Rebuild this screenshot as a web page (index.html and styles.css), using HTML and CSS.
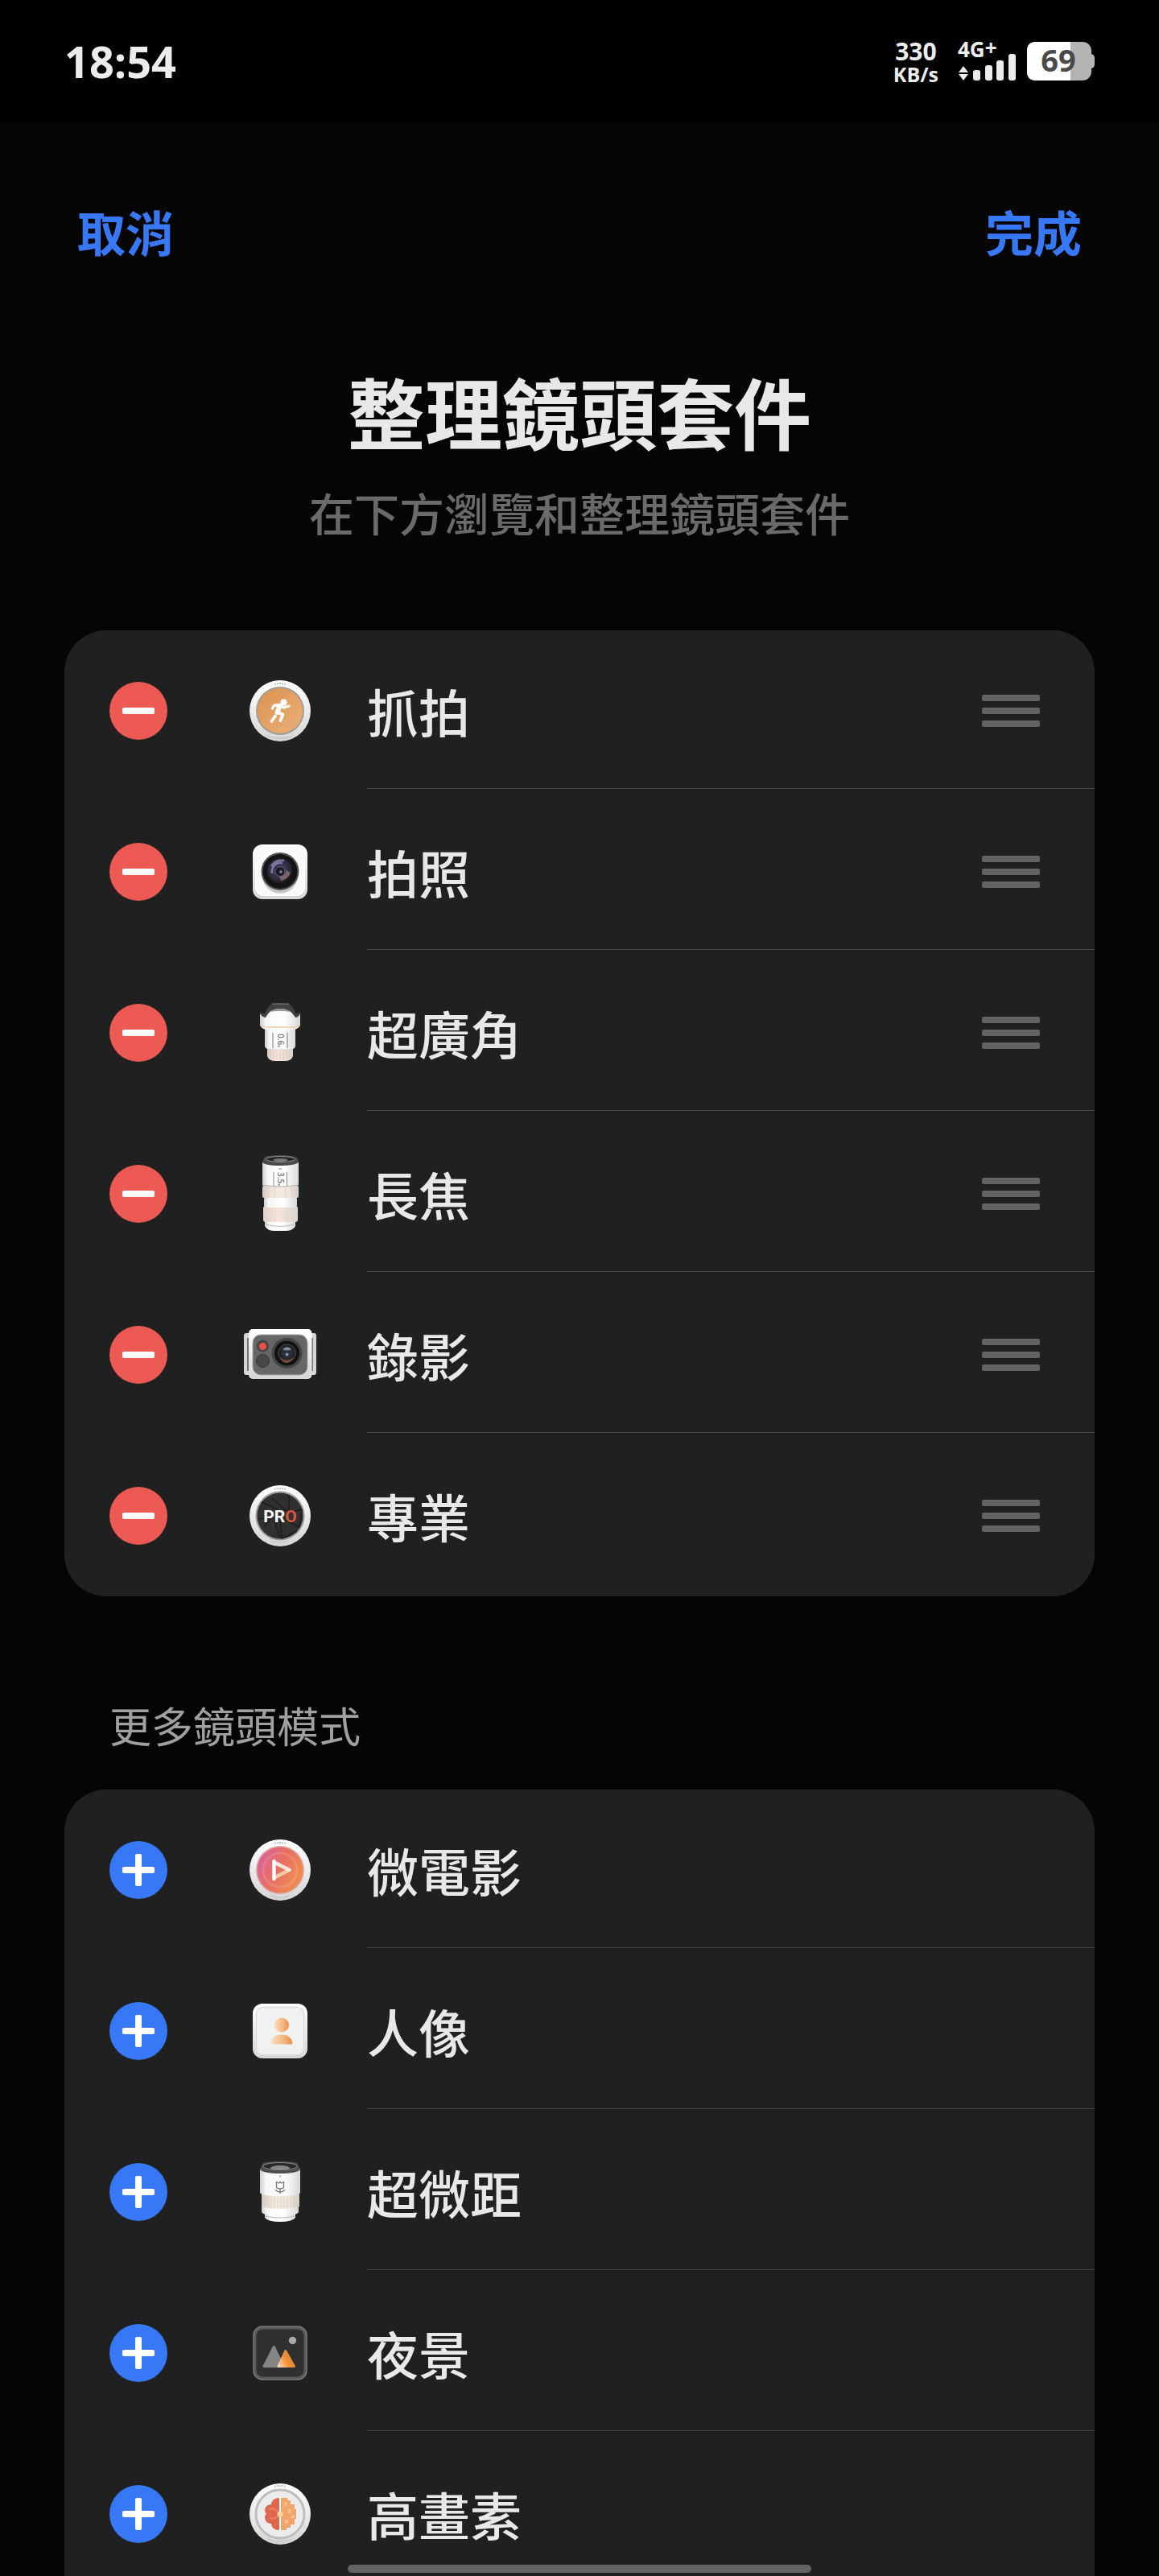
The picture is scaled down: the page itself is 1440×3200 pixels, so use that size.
FILE: index.html
```html
<!DOCTYPE html>
<html lang="zh-Hant">
<head>
<meta charset="utf-8">
<meta name="viewport" content="width=device-width, initial-scale=1">
<title>整理鏡頭套件</title>
<link rel="stylesheet" href="styles.css">
</head>
<body>
<svg class="defs" aria-hidden="true">
  <defs>
    <linearGradient id="rim" x1="0" y1="0" x2="0" y2="1"><stop offset="0" stop-color="#fff"/><stop offset="1" stop-color="#d6d6d6"/></linearGradient>
    <linearGradient id="barrel" x1="0" x2="1"><stop offset="0" stop-color="#cfcfcf"/><stop offset=".15" stop-color="#f8f8f8"/><stop offset=".6" stop-color="#fff"/><stop offset="1" stop-color="#d8d8d8"/></linearGradient>
    <linearGradient id="beige" x1="0" x2="1"><stop offset="0" stop-color="#d5cbc1"/><stop offset=".3" stop-color="#f3e9df"/><stop offset=".7" stop-color="#f3e8de"/><stop offset="1" stop-color="#d3ccc5"/></linearGradient>
    <linearGradient id="blush" x1="0" x2="1"><stop offset="0" stop-color="#dccfc9"/><stop offset=".4" stop-color="#f8e4da"/><stop offset="1" stop-color="#dad4cf"/></linearGradient>
    <linearGradient id="orange" x1="0" y1="0" x2="1" y2="1"><stop offset="0" stop-color="#d9924f"/><stop offset="1" stop-color="#edb07a"/></linearGradient>
    <linearGradient id="sunset" x1="0" y1=".2" x2="1" y2=".7"><stop offset="0" stop-color="#dc609c"/><stop offset=".5" stop-color="#e9705f"/><stop offset="1" stop-color="#f09150"/></linearGradient>
    <linearGradient id="peach" x1="0" x2="1"><stop offset="0" stop-color="#fbdcc0"/><stop offset=".6" stop-color="#f4b680"/><stop offset="1" stop-color="#e58f4c"/></linearGradient>
    <linearGradient id="peak" x1="0" y1="1" x2="1" y2=".4"><stop offset="0" stop-color="#fbd8b6"/><stop offset=".5" stop-color="#f1913c"/><stop offset="1" stop-color="#e28431"/></linearGradient>
    <radialGradient id="glass" cx=".45" cy=".42" r=".6"><stop offset="0" stop-color="#1c1824"/><stop offset=".35" stop-color="#3c3859"/><stop offset=".75" stop-color="#2a2833"/><stop offset="1" stop-color="#0d0d0f"/></radialGradient>
  </defs>
</svg>

<div class="screen">
  <header class="status">
    <time class="clock">18:54</time>
    <div class="indicators">
      <div class="speed"><span class="speed-value">330</span><span class="speed-unit">KB/s</span></div>
      <svg class="signal" width="74" height="48" viewBox="0 0 74 48" role="img" aria-label="4G+">
        <text x="0" y="19" class="signal-text">4G<tspan dy="-2">+</tspan></text>
        <path d="M1 38l6-8 6 8zM1 40h12l-6 8z"/>
        <rect x="19" y="35" width="9" height="13" rx="3"/><rect x="34" y="29" width="9" height="19" rx="3"/><rect x="48" y="23" width="9" height="25" rx="3"/><rect x="63" y="15" width="9" height="33" rx="3"/>
      </svg>
      <svg class="battery" width="84" height="48" viewBox="0 0 84 48" role="img" aria-label="69%">
        <path d="M80 15q4 1 4 5v8q0 4-4 5z" fill="#b4b4b4"/>
        <rect width="80" height="48" rx="11" fill="#b4b4b4"/>
        <path d="M54 0H11Q0 0 0 11v26q0 11 11 11h43z" fill="#fff"/>
        <text x="39" y="37" text-anchor="middle" class="battery-text">69</text>
      </svg>
    </div>
  </header>

  <main class="sheet">
    <nav class="actions">
      <button type="button" class="action">取消</button>
      <button type="button" class="action">完成</button>
    </nav>
    <h1 class="title">整理鏡頭套件</h1>
    <p class="subtitle">在下方瀏覽和整理鏡頭套件</p>

    <ul class="card">
      <li class="row">
        <button type="button" class="toggle remove" aria-label="移除抓拍"></button>
        <svg class="icon" viewBox="0 0 96 96" aria-hidden="true">
          <circle cx="48" cy="48" r="38" fill="url(#rim)"/>
          <circle cx="48" cy="48" r="30" fill="#a59c94"/>
          <circle cx="48" cy="48" r="28" fill="url(#orange)"/>
          <path d="M41 15q7-2 14 0M33 79q15 6 30 0" fill="none" stroke="#c4c4c4" stroke-width="2" stroke-dasharray="2 1"/>
          <circle cx="52.6" cy="37.4" r="4" fill="#fff"/>
          <g fill="none" stroke="#fff" stroke-linecap="round" stroke-linejoin="round"><path d="M38.5 45l2-3.500 7-1 5 3.500 6.500-2" stroke-width="3.400"/><path d="M47.500 42l-3 8" stroke-width="6"/><path d="M45 50l6.500 2.500-3 7.500M42 54.500l-4.500 6.500" stroke-width="3.800"/></g>
        </svg>
        <span class="label">抓拍</span>
        <button type="button" class="drag" aria-label="排序抓拍"><i></i><i></i><i></i></button>
      </li>
      <li class="row">
        <button type="button" class="toggle remove" aria-label="移除拍照"></button>
        <svg class="icon" viewBox="0 0 96 96" aria-hidden="true">
          <rect x="14" y="14" width="68" height="68" rx="12" fill="url(#rim)"/>
          <rect x="17" y="16" width="62" height="62" rx="10" fill="#fafafa"/>
          <circle cx="48" cy="53" r="22" fill="#c9c9c9"/>
          <circle cx="48" cy="47.500" r="23.500" fill="#55565a"/>
          <circle cx="48" cy="47.500" r="21.500" fill="#141415"/>
          <circle cx="48" cy="47.500" r="16" fill="url(#glass)"/>
          <path d="M37 41q6-9 16-7M38 50a11 11 0 0 1 13-13" fill="none" stroke="#7c789f" stroke-width="2.500"/>
          <path d="M49 59q9-2 12-10l-5-3q-2 8-9 8z" fill="#8c7370" opacity=".8"/>
          <circle cx="48" cy="47.500" r="6" fill="#1a1720" stroke="#6b6684"/>
          <circle cx="49" cy="48" r="2" fill="#77708c"/>
        </svg>
        <span class="label">拍照</span>
        <button type="button" class="drag" aria-label="排序拍照"><i></i><i></i><i></i></button>
      </li>
      <li class="row">
        <button type="button" class="toggle remove" aria-label="移除超廣角"></button>
        <svg class="icon" viewBox="0 0 96 96" aria-hidden="true">
          <path d="M32 67h32v10q-2 6-10 6H42q-8 0-10-6z" fill="url(#blush)"/>
          <path d="M36 70v9M40 70v10M44 70v11M48 70v11M52 70v11M56 70v10M60 70v9" stroke="#d9cdc6"/>
          <path d="M29 43h38v22q-1 3-4 3H33q-3 0-4-3z" fill="url(#barrel)"/>
          <path d="M38 12h21q6 4 8 12l6-1v10H23V23l6 1q3-8 9-12z" fill="#414141"/>
          <path d="M38 12h21" stroke="#888"/>
          <path d="M23 24q3 5 7 5 5-11 18-11t19 11q4 0 6-5v15q-3 5-9 5H32q-6 0-9-5z" fill="url(#barrel)"/>
          <path d="M34 22q14-8 28 0-14-2-28 0z" fill="#999"/>
          <path d="M24 38q4 3 10 3h29q6 0 9-3" fill="none" stroke="#efc9a6" stroke-width="1.500"/>
          <path d="M39 48v19M57 48v19" stroke="#777"/>
          <text transform="translate(45 49) rotate(90)" class="lens-text">0.6<tspan font-size="5">x</tspan></text>
        </svg>
        <span class="label">超廣角</span>
        <button type="button" class="drag" aria-label="排序超廣角"><i></i><i></i><i></i></button>
      </li>
      <li class="row">
        <button type="button" class="toggle remove" aria-label="移除長焦"></button>
        <svg class="icon" viewBox="0 0 96 96" aria-hidden="true">
          <path d="M29 81h38v7q-3 6-12 6H41q-9 0-12-6z" fill="url(#barrel)"/>
          <path d="M30 86q18 5 36 0" fill="none" stroke="#bbb"/>
          <rect x="27" y="63" width="43" height="20" rx="3" fill="url(#blush)"/>
          <path d="M34 66v16M42 66v16M55 66v16M63 66v16" stroke="#e3d3ca"/>
          <rect x="28" y="52" width="41" height="13" rx="3" fill="url(#barrel)"/>
          <rect x="26" y="38" width="45" height="15" rx="2" fill="url(#beige)"/>
          <path d="M33 40v12M41 40v12M55 40v12M63 40v12" stroke="#ded2c6"/>
          <path d="M26 8h45v29q-2 2-6 2H31q-3 0-5-2z" fill="url(#barrel)"/>
          <path d="M26 37q22 4 45 0" fill="none" stroke="#aaa"/>
          <path d="M28 3q3-3 20-3t21 3l2 6q-5 4-23 4T26 9z" fill="#4a4a4a"/>
          <ellipse cx="48.500" cy="5" rx="18" ry="3.500" fill="#252525" stroke="#aaa" stroke-width=".8"/>
          <ellipse cx="48.500" cy="6" rx="9" ry="2" fill="#777"/>
          <path d="M40 21v17M56.500 21v17M46 17h4" stroke="#888"/>
          <text transform="translate(45 21) rotate(90)" class="lens-text">3.5<tspan font-size="5">x</tspan></text>
        </svg>
        <span class="label">長焦</span>
        <button type="button" class="drag" aria-label="排序長焦"><i></i><i></i><i></i></button>
      </li>
      <li class="row">
        <button type="button" class="toggle remove" aria-label="移除錄影"></button>
        <svg class="icon" viewBox="0 0 96 96" aria-hidden="true">
          <rect x="3" y="21" width="12" height="52" rx="3" fill="#d6d6d6"/>
          <rect x="81" y="21" width="12" height="52" rx="3" fill="#d6d6d6"/>
          <path d="M8 27v41M88 27v41" stroke="#555" stroke-width="1.500"/>
          <rect x="9" y="16" width="78.500" height="62" rx="5" fill="url(#rim)"/>
          <rect x="14" y="23" width="68" height="50" rx="10" fill="#666" stroke="#a9a9a9"/>
          <circle cx="26.500" cy="37" r="7.500" fill="#454545"/><circle cx="26.500" cy="37.500" r="4.500" fill="#ee5148"/>
          <circle cx="26.500" cy="55.500" r="8" fill="#484848" stroke="#333"/>
          <circle cx="56.500" cy="46" r="19" fill="#444"/><circle cx="56.500" cy="46" r="15.500" fill="#111"/>
          <circle cx="56.500" cy="46" r="11" fill="#252525" stroke="#444"/><path d="M48 51q8 7 17 0-3 7-9 7t-8-7z" fill="#744a38"/>
          <circle cx="56.500" cy="45" r="7" fill="#28303a"/><path d="M51 41q6-5 11 0-5 3-11 0z" fill="#8292a0"/><circle cx="56.500" cy="47.500" r="2" fill="#8392a8"/>
        </svg>
        <span class="label">錄影</span>
        <button type="button" class="drag" aria-label="排序錄影"><i></i><i></i><i></i></button>
      </li>
      <li class="row">
        <button type="button" class="toggle remove" aria-label="移除專業"></button>
        <svg class="icon" viewBox="0 0 96 96" aria-hidden="true">
          <circle cx="48" cy="48" r="38" fill="url(#rim)"/>
          <circle cx="48" cy="48" r="30.500" fill="#999"/>
          <circle cx="48" cy="48" r="28.500" fill="#303030"/>
          <path d="M59 22v22L37 26M25 31l20 9-17 22M21 52l19-2 8 26M48 48l2 28 19-9M54 53l18 9 3-22-16 4" fill="none" stroke="#1d1d1d" stroke-width="1.500"/>
          <path d="M41 15q7-2 14 0M37 79q11 4 22 0" fill="none" stroke="#c4c4c4" stroke-width="2" stroke-dasharray="2 1"/>
          <text x="48" y="56" text-anchor="middle" class="pro-text">PR<tspan fill="#d9573e">O</tspan></text>
        </svg>
        <span class="label">專業</span>
        <button type="button" class="drag" aria-label="排序專業"><i></i><i></i><i></i></button>
      </li>
    </ul>

    <h2 class="section">更多鏡頭模式</h2>
    <ul class="card more">
      <li class="row">
        <button type="button" class="toggle add" aria-label="加入微電影"></button>
        <svg class="icon" viewBox="0 0 96 96" aria-hidden="true">
          <circle cx="48" cy="48" r="38" fill="url(#rim)"/>
          <circle cx="48" cy="48" r="30" fill="#dcaaa6"/>
          <circle cx="48" cy="48" r="28.500" fill="url(#sunset)"/>
          <circle cx="48" cy="48" r="21" fill="none" stroke="#fff" stroke-opacity=".12" stroke-width="3"/>
          <path d="M41 15q7-2 14 0M37 80q11 4 22 0" fill="none" stroke="#c4c4c4" stroke-width="2" stroke-dasharray="2 1"/>
          <g fill="none" stroke-linecap="round" stroke-width="4.500"><path d="M42 57l17-9" stroke="#f9c9ae"/><path d="M43 39.500L59.500 48" stroke="#fce6da"/><path d="M40.500 37v22" stroke="#fff"/></g>
        </svg>
        <span class="label">微電影</span>
      </li>
      <li class="row">
        <button type="button" class="toggle add" aria-label="加入人像"></button>
        <svg class="icon" viewBox="0 0 96 96" aria-hidden="true">
          <rect x="14" y="14" width="68" height="68" rx="12" fill="url(#rim)"/>
          <rect x="18.500" y="18.500" width="59" height="59" rx="8" fill="#f1f1f1" stroke="#dedede" stroke-width="1.500"/>
          <circle cx="50" cy="40.500" r="9" fill="url(#peach)"/>
          <path d="M37 64.500v-3q2-9 13-9t13 9v3z" fill="url(#peach)"/>
        </svg>
        <span class="label">人像</span>
      </li>
      <li class="row">
        <button type="button" class="toggle add" aria-label="加入超微距"></button>
        <svg class="icon" viewBox="0 0 96 96" aria-hidden="true">
          <path d="M29 72h38v8q-4 5-19 5t-19-5z" fill="url(#barrel)"/>
          <path d="M25 66h46v7q-2 3-7 3H32q-5 0-7-3z" fill="url(#barrel)"/>
          <path d="M30 78q18 4 36 0" fill="none" stroke="#bbb"/>
          <path d="M25 50h47v16q-6 3-23 3t-24-3z" fill="url(#beige)"/>
          <path d="M29 54v12M33 54v13M37 54v14M41 54v14M45 54v14M49 54v14M53 54v14M57 54v14M61 54v13M65 54v13M69 54v12" stroke="#dacdc2"/>
          <path d="M23 19h50v30q-3 4-25 4T23 49z" fill="url(#barrel)"/>
          <path d="M27 12q5-2 21-2t21 2l4 8q-4 5-25 5T23 20z" fill="#505050"/>
          <ellipse cx="48" cy="16" rx="21" ry="4.500" fill="#282828" stroke="#999" stroke-width=".8"/>
          <ellipse cx="48" cy="18" rx="12" ry="3" fill="#888"/>
          <path d="M48 27v3" stroke="#888"/>
          <path d="M43.500 35.500v7q4.500 3 9 0v-7l-3 1.500-1.500-1.500-1.500 1.500zM48 44v6M42 45q3 3 6 3t6-3" fill="none" stroke="#777" stroke-width="1.300"/>
        </svg>
        <span class="label">超微距</span>
      </li>
      <li class="row">
        <button type="button" class="toggle add" aria-label="加入夜景"></button>
        <svg class="icon" viewBox="0 0 96 96" aria-hidden="true">
          <rect x="15" y="15" width="66" height="66" rx="11" fill="#5a5a5a" stroke="#7a7a7a" stroke-width="1.500"/>
          <rect x="18.500" y="18.500" width="59" height="59" rx="8" fill="#303030"/>
          <path d="M40.300 40.500L28 64.500h24z" fill="#858585" stroke="#858585" stroke-width="3" stroke-linejoin="round"/>
          <path d="M54.700 45.500L46 64.500h19.500z" fill="url(#peak)" stroke="url(#peak)" stroke-width="3" stroke-linejoin="round"/>
          <circle cx="63.500" cy="32.500" r="4.700" fill="#a8a8a8"/>
        </svg>
        <span class="label">夜景</span>
      </li>
      <li class="row">
        <button type="button" class="toggle add" aria-label="加入高畫素"></button>
        <svg class="icon" viewBox="0 0 96 96" aria-hidden="true">
          <circle cx="48" cy="48" r="38" fill="url(#rim)"/>
          <circle cx="48" cy="48" r="30" fill="#ececec" stroke="#bdbdbd" stroke-width="3"/>
          <path d="M41 14q7-2 14 0M33 79q15 6 30 0" fill="none" stroke="#c4c4c4" stroke-width="2" stroke-dasharray="2 1"/>
          <path d="M47 28v40q-9 0-10-8-8-1-8-8 0-3 2-4-2-2-2-5 0-6 8-7 1-8 10-8z" fill="#e2654e"/>
          <path d="M47 47q-7-8-13-5M47 49q-7 7-12 4" stroke="#ef8068" stroke-width="2" fill="none"/>
          <path d="M49 28h8v3h4v5h5v6h2v12h-2v7h-5v4h-5v3h-7z" fill="#f2a56b"/>
          <path d="M53 33h4v5h-4zM58 42h4v5h-4zM62 49h4v4h-4zM54 55h4v5h-4z" fill="#f7bd8d"/>
          <path d="M48 28v40" stroke="#fff" stroke-width="2"/>
          <circle cx="48" cy="48" r="3.500" fill="#f3d999"/>
        </svg>
        <span class="label">高畫素</span>
      </li>
    </ul>
  </main>
  <div class="home-bar"></div>
</div>
</body>
</html>
```
FILE: styles.css
```css
* { box-sizing: border-box; }

body {
  margin: 0;
  background: #050503;
  color: #e8e8e8;
  font-family: "Noto Sans CJK TC", "Noto Sans", sans-serif;
}

button {
  padding: 0;
  border: 0;
  background: none;
  font-family: inherit;
}

.defs {
  position: absolute;
  width: 0;
  height: 0;
}

.screen {
  display: flex;
  flex-direction: column;
  height: 100vh;
  overflow: hidden;
}

/* Status bar */
.status {
  flex: none;
  display: flex;
  align-items: center;
  justify-content: space-between;
  height: 152px;
  padding: 0 80px;
  background: #000;
  color: #ececec;
  font-family: "Open Sans", "Noto Sans", sans-serif;
}

.clock {
  font-size: 54px;
  font-weight: 700;
  line-height: 76px;
}

.indicators {
  display: flex;
  align-items: center;
  gap: 12px;
}

.speed {
  display: flex;
  flex-direction: column;
  align-items: center;
  margin-right: 12px;
  padding-top: 4px;
  font-weight: 700;
}

.speed-value { font-size: 30px; line-height: 28px; }
.speed-unit { font-size: 25px; line-height: 28px; }

.signal,
.battery { overflow: visible; }

.signal { fill: #ececec; }
.signal-text { font-size: 26px; font-weight: 700; }
.battery-text { font-size: 38px; font-weight: 700; fill: #4a4a4a; }

/* Sheet */
.sheet {
  flex: 1;
  min-height: 0;
  padding: 95px 80px 0;
  overflow: hidden;
}

.actions {
  display: flex;
  justify-content: space-between;
  padding: 0 16px;
}

.action {
  color: #3778f6;
  font-size: 60px;
  font-weight: 700;
  line-height: 80px;
}

.title {
  margin: 123px 0 0;
  font-size: 96px;
  font-weight: 700;
  line-height: 120px;
  text-align: center;
}

.subtitle {
  margin: 26px 0 0;
  color: #6a6a69;
  font-size: 56px;
  font-weight: 500;
  line-height: 80px;
  text-align: center;
}

.section {
  margin: 118px 0 38px;
  padding-left: 56px;
  color: #a0a0a0;
  font-size: 52px;
  font-weight: 400;
  line-height: 84px;
}

.card {
  margin: 0;
  padding: 0;
  border-radius: 52px;
  background: #202020;
  list-style: none;
}

.subtitle + .card { margin-top: 107px; }

.more { padding-bottom: 80px; }

.row {
  display: flex;
  align-items: center;
  height: 200px;
  padding-left: 56px;
}

/* Add and remove buttons */
.toggle {
  display: grid;
  place-items: center;
  width: 72px;
  height: 72px;
  border-radius: 50%;
}

.toggle::before,
.toggle::after {
  grid-area: 1 / 1;
  width: 40px;
  height: 8px;
  border-radius: 2px;
  background: #fff;
  content: "";
}

.remove { background: #ed5a54; }
.remove::after { display: none; }
.add { background: #3778f6; }
.add::after { width: 8px; height: 40px; }

.icon {
  width: 96px;
  height: 96px;
  margin: 0 60px 0 92px;
}

.lens-text {
  fill: #777;
  font-family: "Open Sans", sans-serif;
  font-size: 10px;
  font-weight: 600;
}

.pro-text {
  fill: #fff;
  font-family: Roboto, sans-serif;
  font-size: 21px;
  font-weight: 700;
}

.label {
  flex: 1;
  align-self: stretch;
  display: flex;
  align-items: center;
  margin-bottom: 3px;
  padding-top: 2px;
  border-bottom: 1px solid #444;
  font-size: 64px;
  font-weight: 500;
}

.row:last-child .label { border-color: transparent; }

.drag {
  align-self: stretch;
  display: flex;
  flex-direction: column;
  align-items: flex-start;
  justify-content: center;
  gap: 8px;
  width: 140px;
  margin-bottom: 3px;
  padding-top: 4px;
  border-bottom: 1px solid #444;
}

.row:last-child .drag { border-color: transparent; }

.drag i {
  width: 72px;
  height: 8px;
  border-radius: 2px;
  background: #636363;
}

/* Gesture bar */
.home-bar {
  position: fixed;
  bottom: 4px;
  left: 50%;
  width: 40%;
  height: 10px;
  border-radius: 5px;
  background: #636363;
  transform: translateX(-50%);
}
```
